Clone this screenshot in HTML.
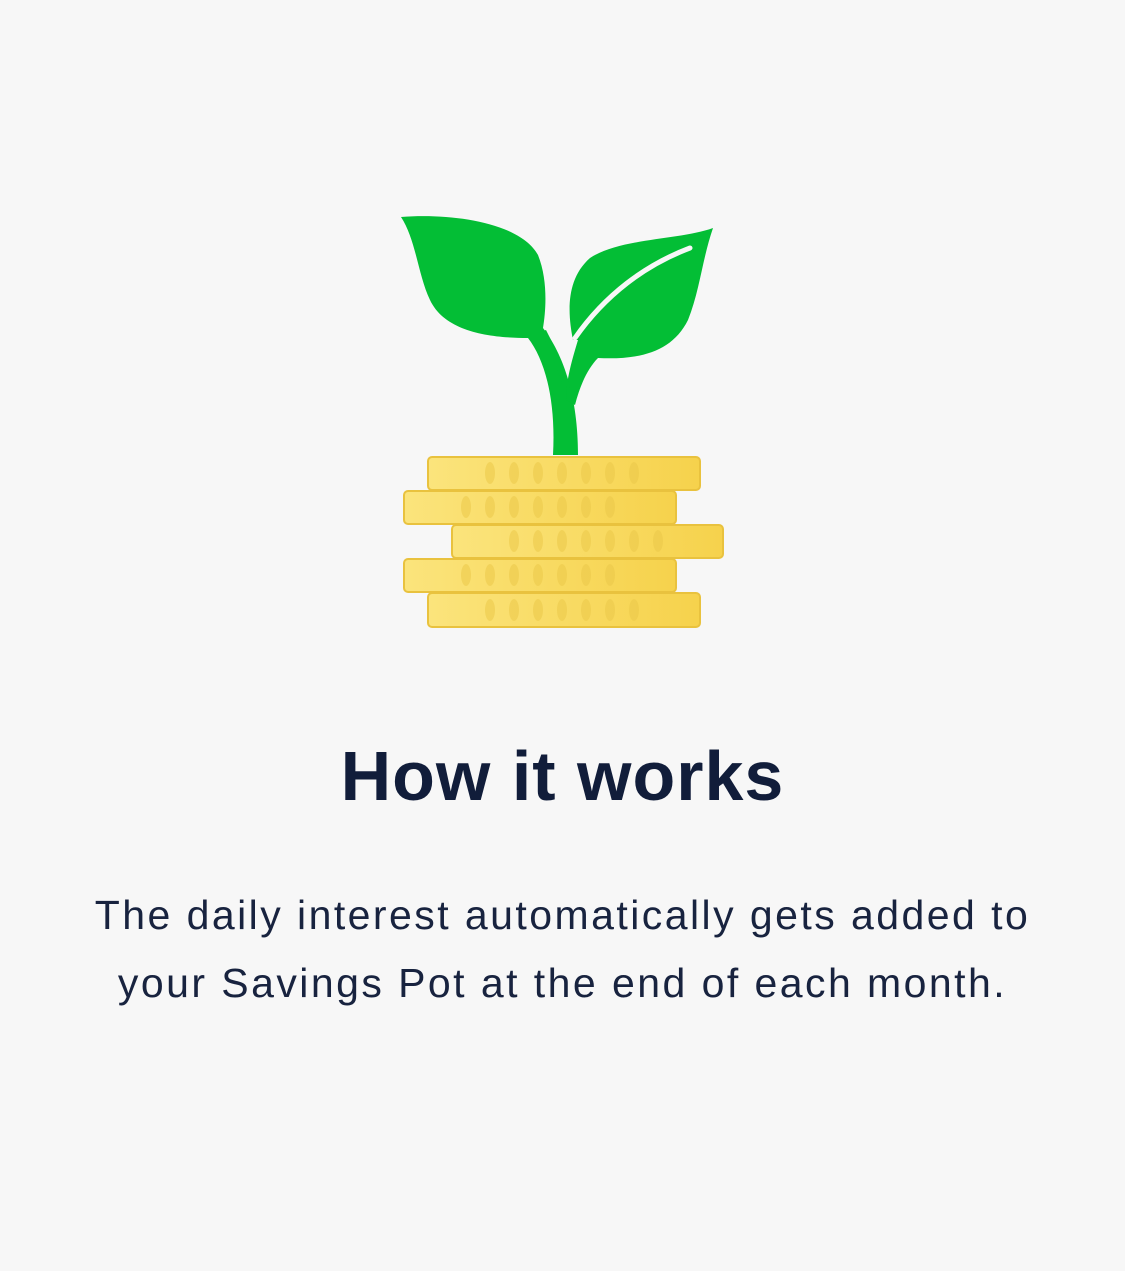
<!DOCTYPE html>
<html><head><style>
html,body{margin:0;padding:0;background:#f7f7f7;width:1125px;height:1271px;overflow:hidden}
h1{position:absolute;left:0;width:1125px;top:731px;margin:0;text-align:center;font:bold 70px/90px "Liberation Sans",sans-serif;color:#111d3a;letter-spacing:1px}
p{position:absolute;left:0;width:1125px;top:881px;margin:0;text-align:center;font:41px/68px "Liberation Sans",sans-serif;color:#18233f;letter-spacing:2.45px}
</style></head><body>
<svg width="1125" height="700" style="position:absolute;left:0;top:0">
<defs><linearGradient id="g" x1="0" x2="1"><stop offset="0" stop-color="#fbe47c"/><stop offset="1" stop-color="#f6d24c"/></linearGradient>
<g id="r"><ellipse cx="0" cy="0" rx="5" ry="11"/><ellipse cx="24" cy="0" rx="5" ry="11"/><ellipse cx="48" cy="0" rx="5" ry="11"/><ellipse cx="72" cy="0" rx="5" ry="11"/><ellipse cx="96" cy="0" rx="5" ry="11"/><ellipse cx="120" cy="0" rx="5" ry="11"/><ellipse cx="144" cy="0" rx="5" ry="11"/></g>
</defs>
<g fill="#03be35">
<path d="M401,217 C450,213 520,222 538,255 C548,280 546,310 543,328 C560,350 578,390 578,455 L553,455 C556,400 545,360 528,338 C490,338 445,332 430,300 C418,275 416,240 401,217 Z"/>
<path d="M713,228 C680,240 620,238 590,258 C565,280 568,315 573,340 L578,340 C572,360 566,380 566,400 L575,405 C580,385 588,368 598,358 C640,360 672,352 688,320 C700,290 702,260 713,228 Z"/>
<path d="M562,384 C555,360 548,345 540,332 L546,330 C556,350 566,370 570,388 Z"/>
</g>
<path d="M575,338 C605,295 645,265 690,248" stroke="#f7f7f7" stroke-width="5" fill="none" stroke-linecap="round"/>
<g fill="url(#g)" stroke="#e9c23e" stroke-width="2">
<rect x="428" y="457" width="272" height="33" rx="4"/>
<rect x="404" y="491" width="272" height="33" rx="4"/>
<rect x="452" y="525" width="271" height="33" rx="4"/>
<rect x="404" y="559" width="272" height="33" rx="4"/>
<rect x="428" y="593" width="272" height="34" rx="4"/>
</g>
<g fill="#ecc94a" opacity="0.55">
<use href="#r" x="490" y="473"/><use href="#r" x="466" y="507"/><use href="#r" x="514" y="541"/><use href="#r" x="466" y="575"/><use href="#r" x="490" y="610"/>
</g>
</svg>
<h1>How it works</h1>
<p>The daily interest automatically gets added to<br>your Savings Pot at the end of each month.</p>
</body></html>
